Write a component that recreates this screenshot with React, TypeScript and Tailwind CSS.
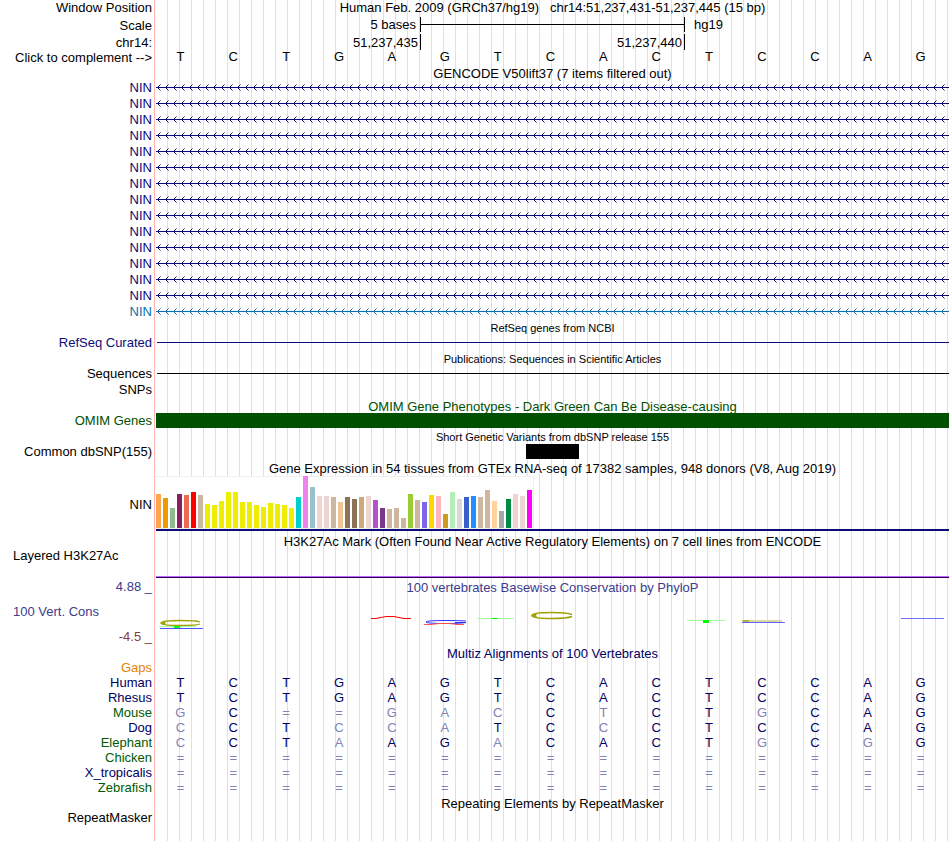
import { useState, type ReactNode } from 'react';

const SEQUENCE = 'TCTGAGTCACTCCAG';
const COMPLEMENT: Record<string, string> = { A: 'T', T: 'A', C: 'G', G: 'C' };

const GENES = [...Array(14).fill('#0c0c78'), '#0c6eaf'];

const GTEX: [number, string][] = [
  [34, '#ffa54f'], [30, '#ee9a00'], [20, '#8fbc8f'], [34, '#8b1c62'], [33, '#ee6a50'], [36, '#ff0000'],
  [33, '#cdb79e'], [24, '#eeee00'], [23, '#eeee00'], [27, '#eeee00'], [36, '#eeee00'], [36, '#eeee00'],
  [26, '#eeee00'], [26, '#eeee00'], [23, '#eeee00'], [21, '#eeee00'], [25, '#eeee00'], [24, '#eeee00'],
  [23, '#eeee00'], [20, '#eeee00'], [31, '#00cdcd'], [52, '#ee82ee'], [41, '#9ac0cd'], [32, '#eed5d2'],
  [32, '#eed5d2'], [31, '#cdb79e'], [26, '#eec591'], [31, '#8b7355'], [29, '#8b7355'], [31, '#cdaa7d'],
  [32, '#eed5d2'], [28, '#b452cd'], [20, '#7a378b'], [19, '#cdb79e'], [20, '#cdb79e'], [10, '#cdb79e'],
  [34, '#9acd32'], [28, '#cdb79e'], [26, '#7a67ee'], [33, '#ffd700'], [32, '#ffb6c1'], [14, '#cd9b1d'],
  [36, '#b4eeb4'], [29, '#d9d9d9'], [31, '#3a5fcd'], [32, '#1e90ff'], [31, '#cdb79e'], [38, '#cdb79e'],
  [27, '#ffd39b'], [17, '#a6a6a6'], [29, '#008b45'], [34, '#eed5d2'], [32, '#eed5d2'], [38, '#ff00ff'],
];

const SPECIES = [
  { name: 'Human', bases: 'TCTGAGTCACTCCAG', green: false },
  { name: 'Rhesus', bases: 'TCTGAGTCACTCCAG', green: false },
  { name: 'Mouse', bases: 'GC==GACCTCTGCAG', green: true },
  { name: 'Dog', bases: 'CCTCCATCCCTCCAG', green: false },
  { name: 'Elephant', bases: 'CCTAAGACACTGCGG', green: true },
  { name: 'Chicken', bases: '===============', green: true },
  { name: 'X_tropicalis', bases: '===============', green: false },
  { name: 'Zebrafish', bases: '===============', green: true },
];

// conservation logo marks, keyed by base column; each cell is 53 x 51
const LOGO: Record<number, ReactNode> = {
  0: (
    <>
      <path d="M46 28Q42 26.5 27 26.5Q7 26.5 7 29Q7 31.5 27 31.5Q42 31.5 46 30" fill="none" stroke="#a0a000" strokeWidth="1.3" />
      <path d="M6 29L13 26.5L11 29L13 31.5Z" fill="#a0a000" />
      <path d="M5 32.5H42" stroke="#a0ffa0" />
      <path d="M20 32H26V34H20Z" fill="#00ff00" />
      <path d="M6 34.5H49" stroke="#5050ff" />
    </>
  ),
  4: <path d="M5 24.5H10L20 22.5H28L38 24.5H45" fill="none" stroke="#ff0000" strokeWidth="1.2" />,
  5: (
    <>
      <path d="M47 27Q40 26.5 27 26.5Q7 26.5 7 28Q7 29.5 27 29.5Q42 29.5 47 28.5H36" fill="none" stroke="#3030ff" />
      <path d="M5 30.5H12L20 29.5H31L38 30.5H45" fill="none" stroke="#ff5050" />
    </>
  ),
  6: (
    <>
      <path d="M5 24.5H42" stroke="#a0ffa0" />
      <path d="M20 24H26V25H20Z" fill="#00ff00" />
    </>
  ),
  7: (
    <>
      <path d="M47 20.5Q42 18.5 27 18.5Q7 18.5 7 21.5Q7 24.5 27 24.5Q42 24.5 47 22.5" fill="none" stroke="#a0a000" strokeWidth="1.5" />
      <path d="M6 21.5L13 18.5L11 21.5L13 24.5Z" fill="#a0a000" />
    </>
  ),
  10: (
    <>
      <path d="M4 26.5H42" stroke="#a0ffa0" />
      <path d="M20 26H26V29H20Z" fill="#00ff00" />
    </>
  ),
  11: (
    <>
      <path d="M6 27H46" stroke="#d8d8a0" strokeWidth="2" />
      <path d="M7 27H13" stroke="#b0b040" strokeWidth="2" />
      <path d="M6 28.5H49" stroke="#6060ff" />
    </>
  ),
  14: <path d="M6 24.5H49" stroke="#7070ff" />,
};

function Row({ label, labelClass = '', className = '', children }: {
  label?: ReactNode;
  labelClass?: string;
  className?: string;
  children?: ReactNode;
}) {
  return (
    <div className={`flex ${className}`}>
      <div className={`w-[154px] shrink-0 whitespace-nowrap pr-0.5 text-right ${labelClass}`}>{label}</div>
      <div className="min-w-0 flex-1">{children}</div>
    </div>
  );
}

function Title({ small = false, className = 'text-black', children }: {
  small?: boolean;
  className?: string;
  children: ReactNode;
}) {
  return (
    <Row className="h-[15px] leading-[17px]">
      <h2 className={`whitespace-pre pl-0.5 pr-px text-center ${small ? 'text-[11px]' : ''} ${className}`}>{children}</h2>
    </Row>
  );
}

function Bases({ bases, compare = false }: { bases: string; compare?: boolean }) {
  return (
    <div className="grid grid-cols-[repeat(15,minmax(0,1fr))] pr-[3px] text-center">
      {bases.split('').map((base, i) => (
        <span key={i} className={!compare ? '' : base === SEQUENCE[i] ? 'text-[#000064]' : 'text-[#8282b4]'}>
          {base}
        </span>
      ))}
    </div>
  );
}

function Intron({ color, id }: { color: string; id: string }) {
  return (
    <div className="pl-0.5 pr-px">
      <svg className="block h-4 w-full" aria-hidden="true">
        <defs>
          <pattern id={id} width="8" height="16" patternUnits="userSpaceOnUse">
            <path d="M0 7H8V8H0Z" fill={color} />
            <path d="M2 6H3V7H2ZM3 5H4V6H3ZM2 8H3V9H2ZM3 9H4V10H3Z" fill={color} />
            <path d="M4 4H5V5H4ZM4 10H5V11H4Z" fill={color} fillOpacity="0.5" />
          </pattern>
        </defs>
        <rect width="100%" height="16" fill={`url(#${id})`} />
      </svg>
    </div>
  );
}

export default function App() {
  const [complement, setComplement] = useState(false);
  const bases = complement ? SEQUENCE.split('').map((b) => COMPLEMENT[b]).join('') : SEQUENCE;

  return (
    <main className="min-h-screen w-full overflow-hidden pb-4 font-['Liberation_Sans',Arial,sans-serif] text-[13px] text-black [background:linear-gradient(#ffb4b4,#ffb4b4)_154px_0/1px_100%_no-repeat,repeating-linear-gradient(to_right,#dcdcff_0px_1px,transparent_1px_12px)_167px_0/100%_100%_no-repeat]">
      <Row label="Window Position" className="h-4 leading-4">
        <h1 className="whitespace-pre pl-0.5 pr-px text-center">
          {'Human Feb. 2009 (GRCh37/hg19)   chr14:51,237,431-51,237,445 (15 bp)'}
        </h1>
      </Row>
      <Row label="Scale" className="h-[17px] leading-[19px]">
        <div className="grid grid-cols-3 pl-0.5 pr-0.5 pt-px leading-[15px]">
          <span className="pr-1 text-right">5 bases</span>
          <span className="flex items-center border-l border-black">
            <span className="h-px w-full bg-black" />
          </span>
          <span className="border-l border-black pl-[9px]">hg19</span>
        </div>
      </Row>
      <Row label="chr14:" className="h-[17px] leading-[19px]">
        <div className="grid grid-cols-3 pl-0.5 pr-0.5 pt-px leading-[15px]">
          <span className="pr-0.5 pt-px text-right">51,237,435</span>
          <span className="border-l border-black pr-0.5 pt-px text-right">51,237,440</span>
          <span className="border-l border-black" />
        </div>
      </Row>
      <Row
        label={<button type="button" className="cursor-pointer" onClick={() => setComplement(!complement)}>{'Click to complement -->'}</button>}
        className="h-[15px] leading-[15px]"
      >
        <div className="leading-[13px]">
          <Bases bases={bases} />
        </div>
      </Row>

      <Title>GENCODE V50lift37 (7 items filtered out)</Title>
      {GENES.map((color, i) => (
        <Row
          key={i}
          label="NIN"
          labelClass={i === GENES.length - 1 ? 'text-[#0c6eaf]' : 'text-[#0c0c78]'}
          className="h-4 leading-4"
        >
          <Intron color={color} id={`intron-${i}`} />
        </Row>
      ))}

      <Title small>RefSeq genes from NCBI</Title>
      <Row label="RefSeq Curated" labelClass="text-[#0c0c78]" className="h-4 leading-4">
        <div className="pl-[3px] pr-px pt-[7px]">
          <div className="h-px bg-[#0c0c78]" />
        </div>
      </Row>

      <Title small>Publications: Sequences in Scientific Articles</Title>
      <Row label="Sequences" className="h-4 leading-4">
        <div className="pl-[3px] pr-px pt-[7px]">
          <div className="h-px bg-black" />
        </div>
      </Row>
      <Row label="SNPs" className="h-4 leading-4" />

      <Title className="text-[#005000]">OMIM Gene Phenotypes - Dark Green Can Be Disease-causing</Title>
      <Row label="OMIM Genes" labelClass="text-[#005000]" className="h-4 leading-4">
        <div className="pl-0.5 pr-px">
          <div className="h-[15px] bg-[#005000]" />
        </div>
      </Row>

      <Title small>Short Genetic Variants from dbSNP release 155</Title>
      <Row label="Common dbSNP(155)" className="h-4 leading-4">
        <div className="grid grid-cols-[repeat(15,minmax(0,1fr))] pl-0.5 pr-px">
          <div className="col-start-8 h-[15px] bg-black" />
        </div>
      </Row>

      <Title>Gene Expression in 54 tissues from GTEx RNA-seq of 17382 samples, 948 donors (V8, Aug 2019)</Title>
      <Row label="NIN" className="h-[58px] leading-[60px]">
        <div className="pl-0.5 pr-px pt-px">
          <div className="flex h-[53px] w-[378px] items-end gap-0.5 border-y border-r border-[#f0f0f0] bg-white">
            {GTEX.map(([height, color], i) => (
              <div key={i} className="w-[5px] shrink-0" style={{ height, backgroundColor: color }} />
            ))}
          </div>
          <div className="h-0.5 bg-[#0c0c78]" />
        </div>
      </Row>

      <Title>H3K27Ac Mark (Often Found Near Active Regulatory Elements) on 7 cell lines from ENCODE</Title>
      <Row label="Layered H3K27Ac" labelClass="pl-[13px] text-left!" className="h-[31px] leading-[15px]">
        <div className="pl-0.5 pr-px pt-7">
          <div className="h-0.5 border-b border-[#28005a] bg-[#c864ff]" />
        </div>
      </Row>

      <div className="flex h-[66px] leading-[15px]">
        <div className="flex w-[154px] shrink-0 flex-col justify-between pb-px pr-0.5 text-right text-[#3c3c8c]">
          <span>4.88 _</span>
          <span className="pl-[13px] text-left">100 Vert. Cons</span>
          <span className="text-[#8c3c3c]">-4.5 _</span>
        </div>
        <div className="min-w-0 flex-1">
          <h2 className="h-[15px] pl-0.5 pr-px text-center leading-[17px] text-[#3c3c8c]">
            100 vertebrates Basewise Conservation by PhyloP
          </h2>
          <div className="grid grid-cols-[repeat(15,minmax(0,1fr))] pr-0.5">
            {SEQUENCE.split('').map((_, i) => (
              <svg key={i} viewBox="0 0 53 51" preserveAspectRatio="none" className="h-[51px] w-full" aria-hidden="true">
                {LOGO[i]}
              </svg>
            ))}
          </div>
        </div>
      </div>

      <Title className="text-[#000064]">Multiz Alignments of 100 Vertebrates</Title>
      <Row label="Gaps" labelClass="text-[#e68200]" className="h-[15px] leading-[15px]" />
      {SPECIES.map((s) => (
        <Row
          key={s.name}
          label={s.name}
          labelClass={s.green ? 'text-[#005a00]' : 'text-[#000064]'}
          className="h-[15px] leading-[15px]"
        >
          <Bases bases={s.bases} compare />
        </Row>
      ))}

      <Title>Repeating Elements by RepeatMasker</Title>
      <Row label="RepeatMasker" className="h-[15px] leading-[15px]" />
    </main>
  );
}
